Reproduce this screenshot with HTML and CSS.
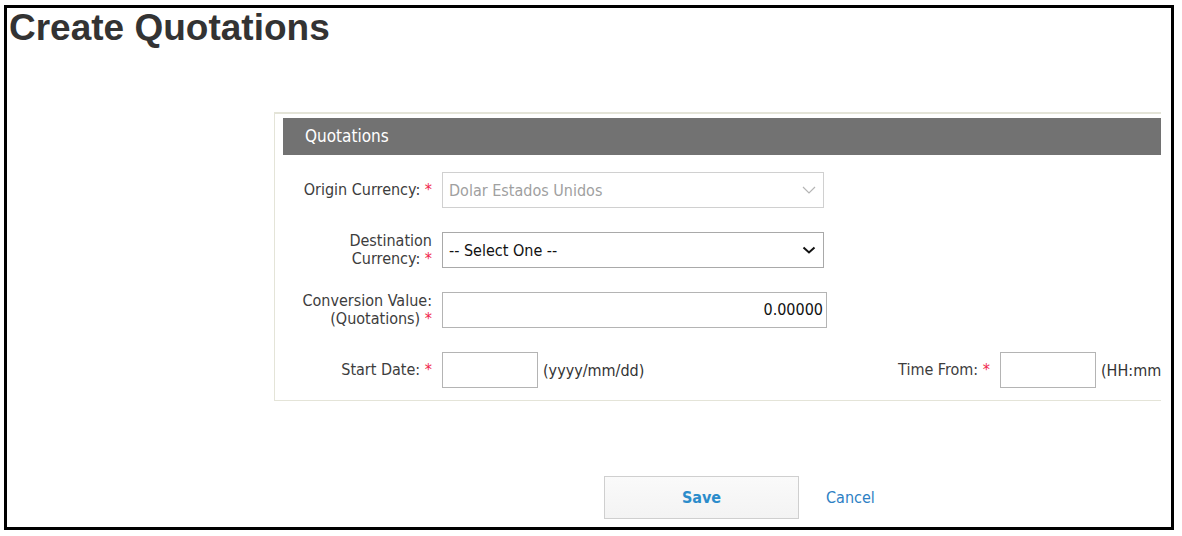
FILE: index.html
```html
<!DOCTYPE html>
<html>
<head>
<meta charset="utf-8">
<link rel="stylesheet" href="styles.css">
</head>
<body>
<div class="frame">
  <h1 class="title">Create Quotations</h1>
  <div class="panel-clip">
    <div class="panel">
      <div class="panel-head">Quotations</div>
      <div class="row">
        <div class="label">Origin Currency: <span class="req">*</span></div>
        <div class="select disabled">
          <span>Dolar Estados Unidos</span>
          <svg class="chev" width="14" height="8" viewBox="0 0 14 8"><path d="M1 1 L7 7 L13 1" fill="none" stroke="#b5b5b5" stroke-width="1.2"/></svg>
        </div>
      </div>
      <div class="row">
        <div class="label">Destination<br>Currency: <span class="req">*</span></div>
        <div class="select">
          <span>-- Select One --</span>
          <svg class="chev" width="14" height="8" viewBox="0 0 14 8"><path d="M1.5 1.5 L7 6.5 L12.5 1.5" fill="none" stroke="#111" stroke-width="2"/></svg>
        </div>
      </div>
      <div class="row">
        <div class="label">Conversion Value:<br>(Quotations) <span class="req">*</span></div>
        <div class="input num">0.00000</div>
      </div>
      <div class="row">
        <div class="pair first">
          <div class="label">Start Date: <span class="req">*</span></div>
          <div class="input small"></div>
          <span class="hint">(yyyy/mm/dd)</span>
        </div>
        <div class="pair">
          <div class="label">Time From: <span class="req">*</span></div>
          <div class="input small"></div>
          <span class="hint">(HH:mm)</span>
        </div>
      </div>
    </div>
  </div>
  <div class="actions">
    <button class="btn-save">Save</button>
    <a class="cancel" href="#">Cancel</a>
  </div>
</div>
</body>
</html>
```

FILE: styles.css
```css
html, body {
  margin: 0;
  padding: 0;
  background: #fff;
}
.frame {
  box-sizing: border-box;
  margin: 5px 0 0 4px;
  width: 1170px;
  height: 525px;
  border: 3px solid #000;
  font-family: "DejaVu Sans Condensed", "Liberation Sans", sans-serif;
  color: #3a3a3a;
  overflow: hidden;
}
.title {
  margin: 0;
  padding: 0 0 0 2px;
  font-family: "Liberation Sans", Arial, sans-serif;
  font-weight: bold;
  font-size: 37px;
  line-height: 40px;
  color: #333;
}
.panel-clip {
  margin: 64px 0 0 267px;
  width: 887px;
  overflow: hidden;
}
.panel {
  box-sizing: border-box;
  width: 960px;
  border: 1px solid #e4e4d8;
  border-top-width: 2px;
  padding: 4px 8px 12px 8px;
}
.panel-head {
  height: 37px;
  background: #727272;
  color: #fff;
  font-size: 17px;
  line-height: 37px;
  padding-left: 22px;
  margin-bottom: 17px;
}
.row {
  display: flex;
  align-items: center;
  height: 36px;
  margin-bottom: 24px;
}
.row:last-child {
  margin-bottom: 0;
}
.label {
  box-sizing: border-box;
  width: 150px;
  flex: none;
  text-align: right;
  font-size: 16px;
  line-height: 18px;
  color: #3d3d3d;
  padding-right: 1px;
  margin-right: 9px;
}
.req {
  color: #f0284e;
}
.select {
  box-sizing: border-box;
  width: 382px;
  height: 36px;
  border: 1px solid #a9a9a9;
  display: flex;
  align-items: center;
  justify-content: space-between;
  padding: 0 6px 0 6px;
  font-size: 16px;
  color: #111;
}
.select.disabled {
  border-color: #d0d0d0;
  color: #a0a0a0;
}
.chev {
  margin-right: 1px;
}
.input {
  box-sizing: border-box;
  height: 36px;
  border: 1px solid #b4b4b4;
  font-size: 16px;
  color: #111;
}
.input.num {
  width: 385px;
  text-align: right;
  line-height: 34px;
  padding-right: 3px;
}
.input.small {
  width: 96px;
  flex: none;
}
.pair {
  display: flex;
  align-items: center;
}
.pair.first {
  width: 558px;
  flex: none;
}
.hint {
  margin-left: 5px;
  font-size: 16px;
  color: #333;
  white-space: nowrap;
}
.actions {
  display: flex;
  align-items: center;
  margin: 75px 0 0 597px;
}
.btn-save {
  box-sizing: border-box;
  width: 195px;
  height: 43px;
  border: 1px solid #cfcfcf;
  background: linear-gradient(#fafafa, #f3f3f3);
  color: #2b8ccb;
  font-family: "DejaVu Sans Condensed", "Liberation Sans", sans-serif;
  font-weight: bold;
  font-size: 16px;
  padding: 0;
}
.cancel {
  margin-left: 27px;
  color: #2d80c4;
  text-decoration: none;
  font-size: 16px;
}
```
